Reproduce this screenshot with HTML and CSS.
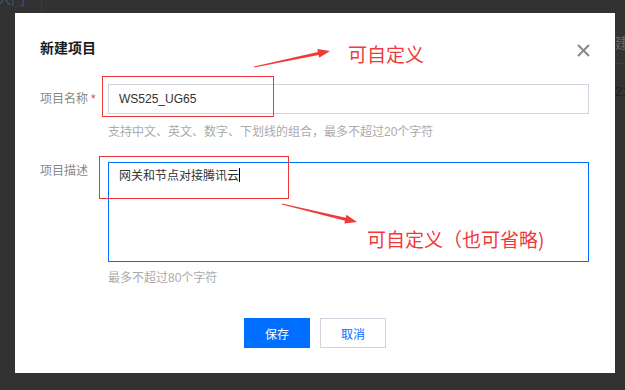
FILE: index.html
```html
<!DOCTYPE html>
<html>
  <head>
    <meta charset="utf-8">
    <title>新建项目</title>
    <link rel="stylesheet" href="styles.css">
  </head>
  <body>
  <div class="page">
    <div class="nav-tab">入门</div>
    <div class="nav-line"></div>
    <div class="side-head">建</div>
    <div class="side-rule"></div>
    <div class="side-cell">21</div>
  </div>

  <div class="modal">
    <div class="modal-head">
      <h3 class="modal-title">新建项目</h3>
      <svg class="modal-close" width="13" height="13" viewBox="0 0 13 13">
        <path d="M1 1 L12 12 M12 1 L1 12" stroke="#888" stroke-width="2" fill="none"/>
      </svg>
    </div>

    <div class="form-row">
      <div class="form-label">项目名称<span class="req">*</span></div>
      <div class="form-ctrl">
        <div class="input">WS525_UG65</div>
        <div class="hint">支持中文、英文、数字、下划线的组合，最多不超过20个字符</div>
      </div>
    </div>

    <div class="form-row row-desc">
      <div class="form-label label-desc">项目描述</div>
      <div class="form-ctrl">
        <div class="textarea">网关和节点对接腾讯云<span class="caret"></span></div>
        <div class="hint hint-desc">最多不超过80个字符</div>
      </div>
    </div>

    <div class="modal-foot">
      <button class="btn btn-primary">保存</button>
      <button class="btn btn-default">取消</button>
    </div>

    <!-- annotations drawn on top of the screenshot -->
    <div class="mark mark-name"></div>
    <div class="mark mark-desc"></div>
    <div class="note note-name">可自定义</div>
    <div class="note note-desc">可自定义（也可省略)</div>
    <svg class="arrows" width="600" height="360" viewBox="0 0 600 360">
      <polygon fill="#f03a3a" points="238.9,53.5 302.95,39.0 302.33,36.07 315,38 304.19,44.87 303.57,41.94 239.1,54.5"/>
      <polygon fill="#f03a3a" points="267.12,190.51 330.68,204.74 331.38,201.82 342,209 329.28,210.58 329.98,207.66 266.88,191.49"/>
    </svg>
  </div>
  </body>
</html>
```

FILE: styles.css
```css
      body {
	  margin: 0;
	  width: 625px;
	  height: 390px;
	  overflow: hidden;
	  background-color: #323232;
	  font-family: "Liberation Sans", "Noto Sans CJK SC", sans-serif;
	  font-size: 12px;
	  position: relative;
      }
      .page {
	  position: absolute;
	  left: 0;
	  top: 0;
	  width: 625px;
	  height: 390px;
      }
      .nav-tab {
	  position: absolute;
	  left: -3px;
	  top: -8px;
	  font-size: 14px;
	  line-height: 14px;
	  color: #45527a;
      }
      .nav-line {
	  position: absolute;
	  left: 41px;
	  top: 0;
	  width: 1px;
	  height: 13px;
	  background-color: #3c3c3c;
      }
      .side-head {
	  position: absolute;
	  left: 615px;
	  top: 36px;
	  font-size: 14px;
	  line-height: 14px;
	  color: #6a6a6a;
      }
      .side-rule {
	  position: absolute;
	  left: 615px;
	  top: 63px;
	  width: 10px;
	  height: 1px;
	  background-color: #3e3e3e;
      }
      .side-cell {
	  position: absolute;
	  left: 615px;
	  top: 85px;
	  font-size: 13px;
	  line-height: 14px;
	  color: #1e1e1e;
      }
      .modal {
	  position: absolute;
	  left: 15px;
	  top: 13px;
	  width: 600px;
	  height: 360px;
	  box-sizing: border-box;
	  padding: 25px 25px 25px 25px;
	  background-color: #fff;
	  display: flex;
	  flex-direction: column;
      }
      .modal-head {
	  display: flex;
	  justify-content: space-between;
	  align-items: flex-start;
	  height: 20px;
      }
      .modal-title {
	  margin: 0;
	  font-size: 14px;
	  line-height: 20px;
	  font-weight: 700;
	  color: #1a1a1a;
      }
      .modal-close {
	  margin-top: 6px;
	  margin-right: 0;
      }
      .form-row {
	  display: flex;
	  margin-top: 26px;
      }
      .row-desc {
	  margin-top: 20px;
      }
      .form-label {
	  width: 68px;
	  line-height: 30px;
	  color: #888;
      }
      .label-desc {
	  line-height: 18px;
	  padding-top: 0;
      }
      .req {
	  color: #e54545;
	  margin-left: 3px;
      }
      .form-ctrl {
	  width: 481px;
      }
      .input {
	  height: 30px;
	  box-sizing: border-box;
	  border: 1px solid #cfd5de;
	  padding: 0 10px;
	  line-height: 28px;
	  color: #333;
      }
      .textarea {
	  height: 100px;
	  box-sizing: border-box;
	  border: 1px solid #006eff;
	  padding: 4px 10px;
	  line-height: 18px;
	  color: #333;
      }
      .caret {
	  display: inline-block;
	  width: 1px;
	  height: 14px;
	  background-color: #000;
	  vertical-align: -2px;
      }
      .hint {
	  margin-top: 8px;
	  line-height: 20px;
	  color: #aaa;
      }
      .hint-desc {
	  margin-top: 6px;
      }
      .modal-foot {
	  display: flex;
	  justify-content: center;
	  gap: 10px;
	  margin-top: 30px;
      }
      .btn {
	  width: 66px;
	  height: 30px;
	  box-sizing: border-box;
	  font-family: inherit;
	  font-size: 12px;
	  cursor: pointer;
	  padding: 0;
      }
      .btn-primary {
	  border: none;
	  background-color: #006eff;
	  color: #fff;
      }
      .btn-default {
	  border: 1px solid #cfd5de;
	  background-color: #fff;
	  color: #006eff;
      }
      .mark {
	  position: absolute;
	  border: 1px solid #ec3538;
      }
      .mark-name {
	  left: 87px;
	  top: 63px;
	  width: 170px;
	  height: 39px;
      }
      .mark-desc {
	  left: 84px;
	  top: 143px;
	  width: 188px;
	  height: 41px;
      }
      .note {
	  position: absolute;
	  font-family: "Noto Sans CJK SC", sans-serif;
	  font-size: 19px;
	  line-height: 19px;
	  color: #f03a3a;
	  white-space: nowrap;
      }
      .note-name {
	  left: 333px;
	  top: 31px;
      }
      .note-desc {
	  left: 352px;
	  top: 216px;
      }
      .arrows {
	  position: absolute;
	  left: 0;
	  top: 0;
	  pointer-events: none;
      }
```
